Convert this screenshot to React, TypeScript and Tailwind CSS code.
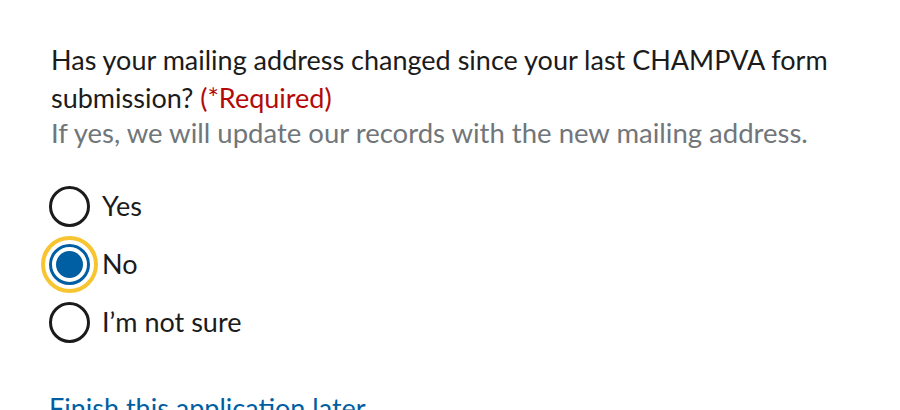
import React from "react";

const font = { fontFamily: "Lato, 'Noto Sans', sans-serif" };

function Radio({ label, checked }: { label: string; checked?: boolean }) {
  return (
    <div className="flex items-center h-[58px]">
      <div className="w-[42px] flex justify-center items-center">
        {checked ? (
          <div className="w-[41px] h-[41px] rounded-full border-[3px] border-[#005ea2] flex items-center justify-center outline-[4px] outline-solid outline-offset-[4px] outline-[#f7c531]">
            <div className="w-[27px] h-[27px] rounded-full bg-[#005ea2]" />
          </div>
        ) : (
          <div className="w-[41px] h-[41px] rounded-full border-[3.5px] border-[#1b1b1b]" />
        )}
      </div>
      <span className="ml-[12px] text-[27px] text-[#1b1b1b]">{label}</span>
    </div>
  );
}

export default function App() {
  return (
    <div className="w-[900px] h-[410px] bg-white overflow-hidden" style={font}>
      <div className="pl-[48px] pt-[41px]">
        <div className="pl-[3px] w-[820px]">
          <p className="text-[27px] leading-[38px] text-[#1b1b1b]">
            Has your mailing address changed since your last CHAMPVA form submission?{" "}
            <span className="text-[#b50909]">(*Required)</span>
          </p>
          <p className="text-[27.5px] leading-[32px] text-[#71767a]">
            If yes, we will update our records with the new mailing address.
          </p>
        </div>
        <div className="mt-[28px] flex flex-col">
          <Radio label="Yes" />
          <Radio label="No" checked />
          <Radio label="I’m not sure" />
        </div>
        <div className="mt-[37px] pl-[1px]">
          <a className="text-[27px] text-[#005ea2] underline">Finish this application later</a>
        </div>
      </div>
    </div>
  );
}
